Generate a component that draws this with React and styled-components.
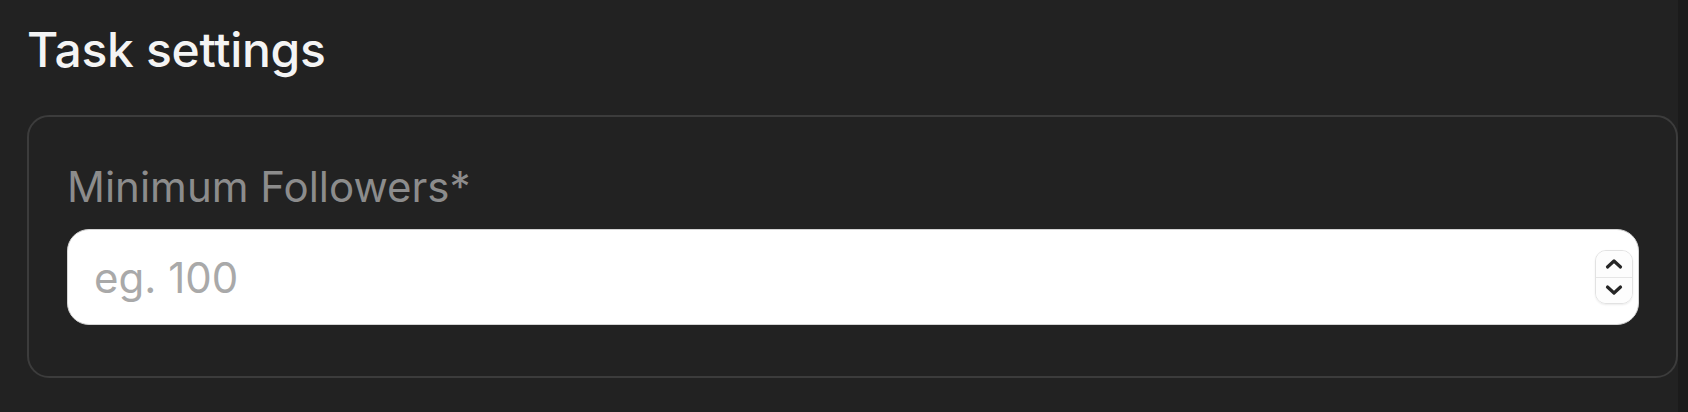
import React from "react";
import styled, { createGlobalStyle } from "styled-components";

const GlobalStyle = createGlobalStyle`
  html, body {
    margin: 0;
    padding: 0;
    background: #222222;
  }
  body {
    font-family: Inter, "Noto Sans", "Liberation Sans", sans-serif;
  }
`;

const Page = styled.div`
  display: flex;
  width: 1688px;
  height: 412px;
  background: #222222;
  overflow: hidden;
`;

const Main = styled.div`
  flex: 1;
  display: flex;
  flex-direction: column;
  padding: 26px 0 0 27px;
`;

const Strip = styled.div`
  width: 10px;
  background: #1b1b1b;
`;

const Title = styled.h1`
  margin: 0 0 41px 0;
  font-size: 48px;
  line-height: 1;
  font-weight: 500;
  color: #f4f4f4;
  letter-spacing: -0.3px;
`;

const Card = styled.div`
  display: flex;
  flex-direction: column;
  gap: 21px;
  border: 2px solid #3c3c3c;
  border-radius: 22px;
  padding: 49px 37px 51px 38px;
`;

const Label = styled.label`
  display: block;
  font-size: 42px;
  line-height: 1;
  color: #8c8c8c;
`;

const Field = styled.div`
  display: flex;
  align-items: center;
  height: 96px;
  box-sizing: border-box;
  background: #ffffff;
  border: 1px solid #d4d4d4;
  border-radius: 22px;
  padding: 0 5px 0 26px;
`;

const NumberInput = styled.input`
  flex: 1;
  border: none;
  outline: none;
  background: transparent;
  font-family: inherit;
  font-size: 42px;
  color: #222;
  padding: 0;
  -moz-appearance: textfield;

  &::placeholder {
    color: #a9a9a9;
  }
  &::-webkit-outer-spin-button,
  &::-webkit-inner-spin-button {
    -webkit-appearance: none;
    margin: 0;
  }
`;

const Stepper = styled.div`
  display: flex;
  flex-direction: column;
  width: 38px;
  height: 54px;
  box-sizing: border-box;
  border: 1px solid #e2e2e2;
  border-radius: 11px;
  box-shadow: 0 1px 2px rgba(0, 0, 0, 0.08);
  overflow: hidden;
`;

const StepButton = styled.button`
  flex: 1;
  display: flex;
  align-items: center;
  justify-content: center;
  border: none;
  background: #fdfdfd;
  padding: 0;
  cursor: pointer;
  border-top: ${(p) => (p.$down ? "1px solid #e6e6e6" : "none")};
`;

const Chevron = ({ down }) => (
  <svg width="20" height="12" viewBox="0 0 20 12">
    <path
      d={down ? "M3.5 3 L10 9 L16.5 3" : "M3.5 9 L10 3 L16.5 9"}
      fill="none"
      stroke="#262626"
      strokeWidth="3.2"
      strokeLinecap="round"
      strokeLinejoin="round"
    />
  </svg>
);

export default function App() {
  return (
    <>
      <GlobalStyle />
      <Page>
        <Main>
          <Title>Task settings</Title>
          <Card>
            <Label htmlFor="min-followers">Minimum Followers*</Label>
            <Field>
              <NumberInput id="min-followers" type="number" placeholder="eg. 100" />
              <Stepper>
                <StepButton aria-label="increase">
                  <Chevron />
                </StepButton>
                <StepButton $down aria-label="decrease">
                  <Chevron down />
                </StepButton>
              </Stepper>
            </Field>
          </Card>
        </Main>
        <Strip />
      </Page>
    </>
  );
}
